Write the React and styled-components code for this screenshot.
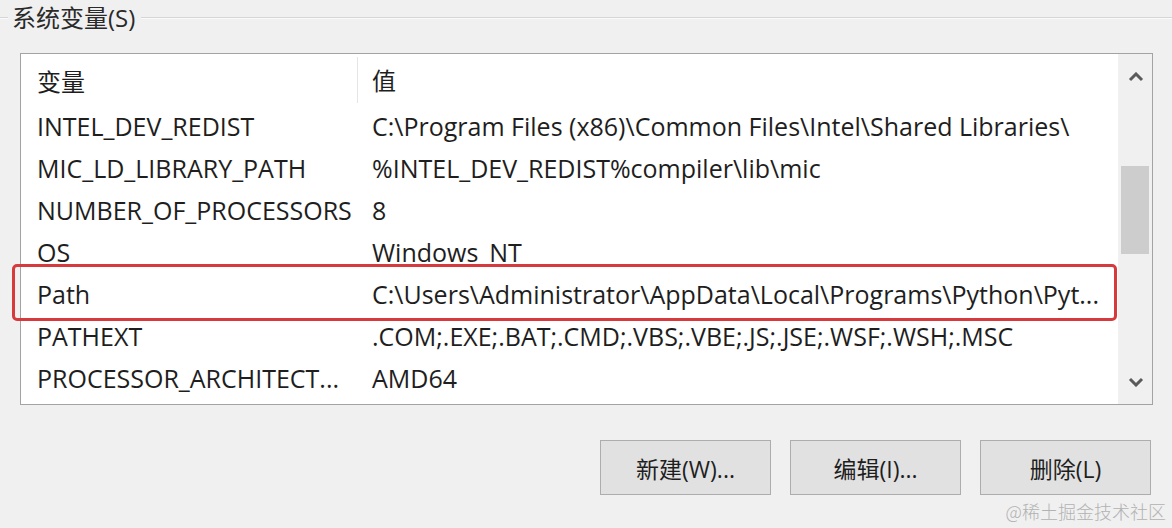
import React from "react";
import styled, { createGlobalStyle } from "styled-components";

const GlobalStyle = createGlobalStyle`
  html, body {
    margin: 0;
    padding: 0;
    background: #f0f0f0;
  }
  body {
    font-family: "Open Sans", "Noto Sans CJK SC", sans-serif;
    color: #1e1e1e;
  }
`;

const variables = [
  { name: "INTEL_DEV_REDIST", value: "C:\\Program Files (x86)\\Common Files\\Intel\\Shared Libraries\\" },
  { name: "MIC_LD_LIBRARY_PATH", value: "%INTEL_DEV_REDIST%compiler\\lib\\mic" },
  { name: "NUMBER_OF_PROCESSORS", value: "8" },
  { name: "OS", value: "Windows_NT" },
  {
    name: "Path",
    value: "C:\\Users\\Administrator\\AppData\\Local\\Programs\\Python\\Pyt...",
    marked: true
  },
  { name: "PATHEXT", value: ".COM;.EXE;.BAT;.CMD;.VBS;.VBE;.JS;.JSE;.WSF;.WSH;.MSC" },
  { name: "PROCESSOR_ARCHITECT...", value: "AMD64" }
];

const Page = styled.div`
  position: relative;
  width: 1172px;
  height: 528px;
  box-sizing: border-box;
  padding-top: 3px;
  overflow: hidden;
`;

const GroupHeader = styled.div`
  display: flex;
  align-items: center;
  height: 30px;
`;

const GroupLine = styled.div`
  height: 1px;
  background: #d6d6d6;
  border-bottom: 1px solid #fafafa;
  width: ${(p) => (p.$grow ? "auto" : "8px")};
  flex: ${(p) => (p.$grow ? 1 : "none")};
`;

const GroupTitle = styled.span`
  font-size: 24px;
  line-height: 30px;
  padding: 0 6px 0 4px;
  color: #2a2a2a;
`;

const ListBox = styled.div`
  display: flex;
  margin: 20px 0 0 20px;
  width: 1133px;
  height: 352px;
  box-sizing: border-box;
  border: 1px solid #a3a3a3;
  background: #fff;
`;

const Table = styled.div`
  flex: 1;
  display: flex;
  flex-direction: column;
`;

const HeaderRow = styled.div`
  display: flex;
  height: 51px;
  align-items: stretch;
`;

const HeaderCell = styled.div`
  display: flex;
  align-items: center;
  box-sizing: border-box;
  font-size: 24px;
  padding-left: ${(p) => (p.$first ? "16px" : "14px")};
  width: ${(p) => (p.$first ? "337px" : "auto")};
  flex: ${(p) => (p.$first ? "none" : 1)};
  border-right: ${(p) => (p.$first ? "1px solid #e5e5e5" : "none")};
  margin: ${(p) => (p.$first ? "3px 0 2px" : "0")};
`;

const Row = styled.div`
  position: relative;
  display: flex;
  align-items: center;
  height: 42px;
  font-size: 25px;
  white-space: nowrap;
`;

const NameCell = styled.div`
  width: 337px;
  box-sizing: border-box;
  padding-left: 16px;
`;

const ValueCell = styled.div`
  flex: 1;
  padding-left: 14px;
  overflow: hidden;
`;

const Highlight = styled.div`
  position: absolute;
  top: -9px;
  bottom: -6px;
  left: -9px;
  right: 1px;
  border: 3px solid #d63a3d;
  border-radius: 5px;
  pointer-events: none;
`;

const ScrollBar = styled.div`
  width: 34px;
  display: flex;
  flex-direction: column;
  background: #f0f0f0;
`;

const ArrowButton = styled.div`
  height: 45px;
  display: flex;
  align-items: center;
  justify-content: center;
  padding-left: 1px;
`;

const Track = styled.div`
  flex: 1;
  display: flex;
  flex-direction: column;
  padding: 0 3px 0 3px;
`;

const Thumb = styled.div`
  height: 88px;
  background: #cdcdcd;
`;

const ButtonRow = styled.div`
  display: flex;
  justify-content: flex-end;
  gap: 19px;
  margin-top: 35px;
  padding-right: 21px;
`;

const Button = styled.div`
  width: 171px;
  height: 55px;
  box-sizing: border-box;
  border: 1px solid #adadad;
  background: #e1e1e1;
  display: flex;
  align-items: center;
  justify-content: center;
  font-size: 23px;
  color: #1e1e1e;
`;

const Watermark = styled.div`
  position: absolute;
  right: 6px;
  bottom: 4px;
  font-size: 18px;
  color: #b2b2b2;
  font-family: "Noto Sans CJK SC", sans-serif;
  font-weight: 300;
`;

const Chevron = ({ down }) => (
  <svg width="16" height="10" viewBox="0 0 16 10">
    <path
      d={down ? "M2 2 L8 8 L14 2" : "M2 8 L8 2 L14 8"}
      fill="none"
      stroke="#5a5a5a"
      strokeWidth="3"
    />
  </svg>
);

export default function App() {
  return (
    <>
      <GlobalStyle />
      <Page>
        <GroupHeader>
          <GroupLine />
          <GroupTitle>系统变量(S)</GroupTitle>
          <GroupLine $grow />
        </GroupHeader>
        <ListBox>
          <Table>
            <HeaderRow>
              <HeaderCell $first>变量</HeaderCell>
              <HeaderCell>值</HeaderCell>
            </HeaderRow>
            {variables.map((v) => (
              <Row key={v.name}>
                <NameCell>{v.name}</NameCell>
                <ValueCell>{v.value}</ValueCell>
                {v.marked && <Highlight />}
              </Row>
            ))}
          </Table>
          <ScrollBar>
            <ArrowButton>
              <Chevron />
            </ArrowButton>
            <Track>
              <Thumb style={{ marginTop: 67 }} />
            </Track>
            <ArrowButton>
              <Chevron down />
            </ArrowButton>
          </ScrollBar>
        </ListBox>
        <ButtonRow>
          <Button>新建(W)...</Button>
          <Button>编辑(I)...</Button>
          <Button>删除(L)</Button>
        </ButtonRow>
        <Watermark>@稀土掘金技术社区</Watermark>
      </Page>
    </>
  );
}
